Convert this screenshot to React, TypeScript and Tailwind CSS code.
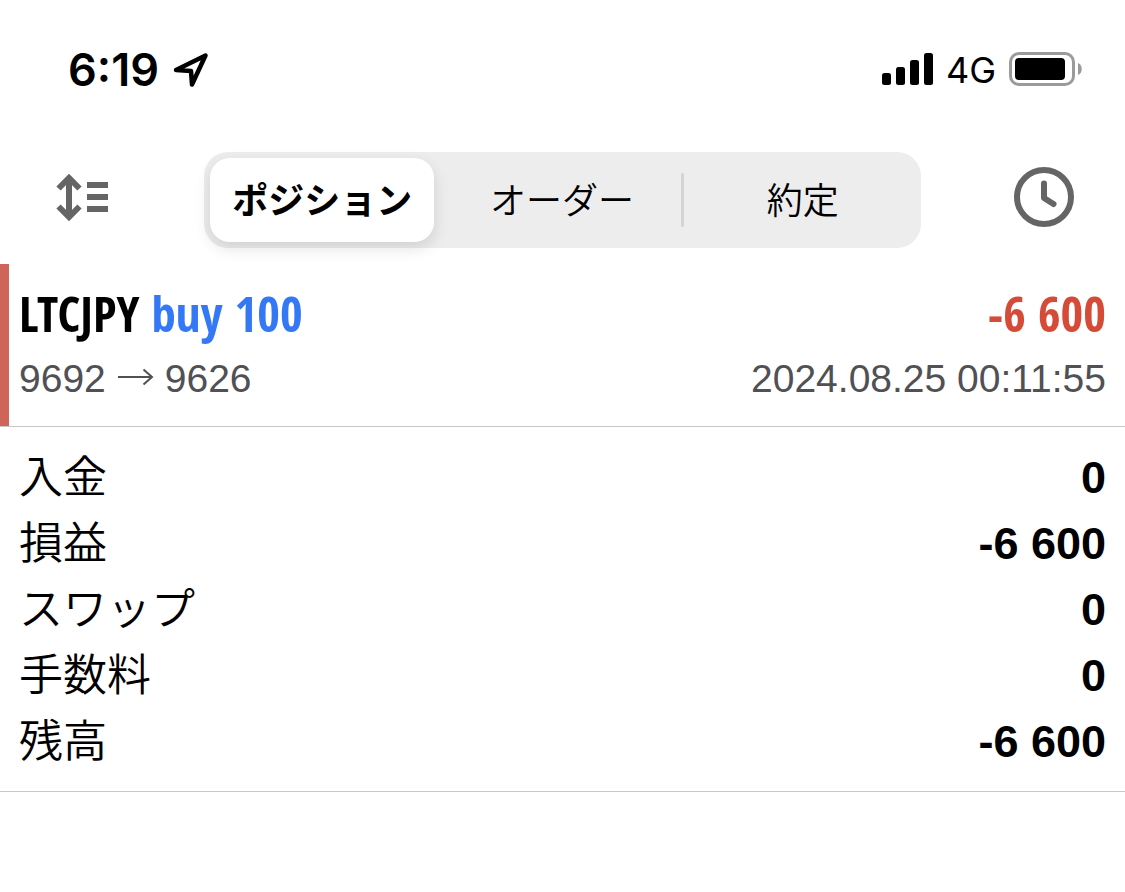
interface Position {
  symbol: string;
  side: string;
  profit: string;
  openPrice: string;
  closePrice: string;
  time: string;
}

interface SummaryRowProps {
  label: string;
  value: string;
}

const positions: Position[] = [
  {
    symbol: "LTCJPY",
    side: "buy 100",
    profit: "-6 600",
    openPrice: "9692",
    closePrice: "9626",
    time: "2024.08.25 00:11:55",
  },
];

const summary: SummaryRowProps[] = [
  { label: "入金", value: "0" },
  { label: "損益", value: "-6 600" },
  { label: "スワップ", value: "0" },
  { label: "手数料", value: "0" },
  { label: "残高", value: "-6 600" },
];

const StatusBar = () => (
  <div className="flex h-[140px] items-center justify-between pr-[43px] pl-[68px] font-['Inter',sans-serif] text-black">
    <div className="flex items-center gap-3">
      <span className="text-[45px] leading-[56px] font-semibold">6:19</span>
      <svg width="38" height="38" viewBox="0 0 38 38" fill="none" aria-hidden="true">
        <path
          d="M5 19 34.5 4.5 21 33.5 20 20Z"
          stroke="currentColor"
          strokeWidth="4.5"
          strokeLinejoin="round"
        />
      </svg>
    </div>

    <div className="flex items-center gap-3">
      {/* Signal strength */}
      <svg width="52" height="34" viewBox="0 0 52 34" fill="currentColor" aria-hidden="true">
        <rect x="0" y="20" width="9" height="12" rx="2.5" />
        <rect x="14" y="14" width="9" height="18" rx="2.5" />
        <rect x="28" y="7" width="9" height="25" rx="2.5" />
        <rect x="42" y="0" width="9" height="32" rx="2.5" />
      </svg>
      <span className="text-[36px] leading-[44px]">4G</span>
      {/* Battery */}
      <svg width="74" height="36" viewBox="0 0 74 36" aria-hidden="true">
        <rect x="2.5" y="1.5" width="63" height="31" rx="8.5" fill="none" stroke="#9b9b9b" strokeWidth="3" />
        <rect x="7" y="6" width="50" height="22" rx="4" fill="#000" />
        <path d="M70 11c5 1.5 5 10.5 0 12Z" fill="#9b9b9b" />
      </svg>
    </div>
  </div>
);

const Toolbar = () => (
  <div className="flex items-center pt-3 pb-4 text-[#656565]">
    <div className="flex w-[204px] shrink-0 pb-1.5 pl-[54px]">
      <button type="button" aria-label="並べ替え">
        <svg width="56" height="50" viewBox="0 0 56 50" fill="none" stroke="currentColor" aria-hidden="true">
          <path d="M15 6v38M4.5 16.5 15 6l10.5 10.5M4.5 34.5 15 45l10.5-10.5" strokeWidth="6" />
          <path d="M33 13h21M33 25h21M33 37h21" strokeWidth="6" />
        </svg>
      </button>
    </div>

    <div
      role="tablist"
      className="flex h-24 flex-1 items-center rounded-3xl bg-[#ededee] text-[36px] leading-[48px] font-[350] text-black"
    >
      <button
        type="button"
        role="tab"
        aria-selected="true"
        className="mr-2 ml-1.5 h-[84px] flex-1 rounded-[20px] bg-white pb-1 font-bold shadow-[0_6px_16px_rgba(0,0,0,0.12)]"
      >
        ポジション
      </button>
      <button type="button" role="tab" aria-selected="false" className="h-full w-1/3 pb-1">
        オーダー
      </button>
      <span className="h-[54px] w-[3px] rounded-full bg-[#d4d4d6]" />
      <button type="button" role="tab" aria-selected="false" className="h-full w-[33%] pb-1">
        約定
      </button>
    </div>

    <div className="flex w-[204px] shrink-0 justify-end pr-[51px] pb-1.5">
      <button type="button" aria-label="履歴">
        <svg width="60" height="60" viewBox="0 0 60 60" fill="none" stroke="currentColor" aria-hidden="true">
          <circle cx="30" cy="30" r="27" strokeWidth="6" />
          <path d="M30 16.5V31l9.5 6" strokeWidth="6" strokeLinecap="round" strokeLinejoin="round" />
        </svg>
      </button>
    </div>
  </div>
);

const PositionRow = ({ symbol, side, profit, openPrice, closePrice, time }: Position) => (
  <li className="border-b border-[#c8c8c8]">
    <div className="border-l-[9px] border-[#cf6558] pt-[19px] pr-[19px] pb-[18px] pl-2.5">
      <div className="flex justify-between font-['Open_Sans_Condensed','Noto_Sans_CJK_JP',sans-serif] text-[49px] leading-[60px] font-bold">
        <p className="text-black">
          {symbol} <span className="text-[#3478f6]">{side}</span>
        </p>
        <p className="text-[#d54b38]">{profit}</p>
      </div>
      <div className="flex justify-between pt-[7px] font-['Liberation_Sans','Noto_Sans_CJK_JP',sans-serif] text-[39px] leading-[58px] text-[#505055]">
        <p className="flex items-center gap-[11px]">
          {openPrice}
          <svg width="37" height="22" viewBox="0 0 37 22" fill="none" stroke="currentColor" aria-hidden="true">
            <path d="M1 9h34M26.5 1.5 35 9l-8.5 7.5" strokeWidth="2" />
          </svg>
          {closePrice}
        </p>
        <time>{time}</time>
      </div>
    </div>
  </li>
);

const SummaryRow = ({ label, value }: SummaryRowProps) => (
  <div className="flex h-[66px] items-center justify-between">
    <dt className="pb-2 text-[44px] leading-[58px] font-[350]">{label}</dt>
    <dd className="font-['Liberation_Sans',sans-serif] text-[45px] leading-[66px] font-bold">{value}</dd>
  </div>
);

export default function App() {
  return (
    <main className="min-h-screen bg-white font-['Noto_Sans_CJK_JP',sans-serif] text-black">
      <StatusBar />
      <Toolbar />
      <ul>
        {positions.map((position) => (
          <PositionRow key={position.time} {...position} />
        ))}
      </ul>
      <dl className="border-b border-[#c8c8c8] pt-[18px] pr-[19px] pb-4 pl-[19px]">
        {summary.map((row) => (
          <SummaryRow key={row.label} {...row} />
        ))}
      </dl>
    </main>
  );
}
